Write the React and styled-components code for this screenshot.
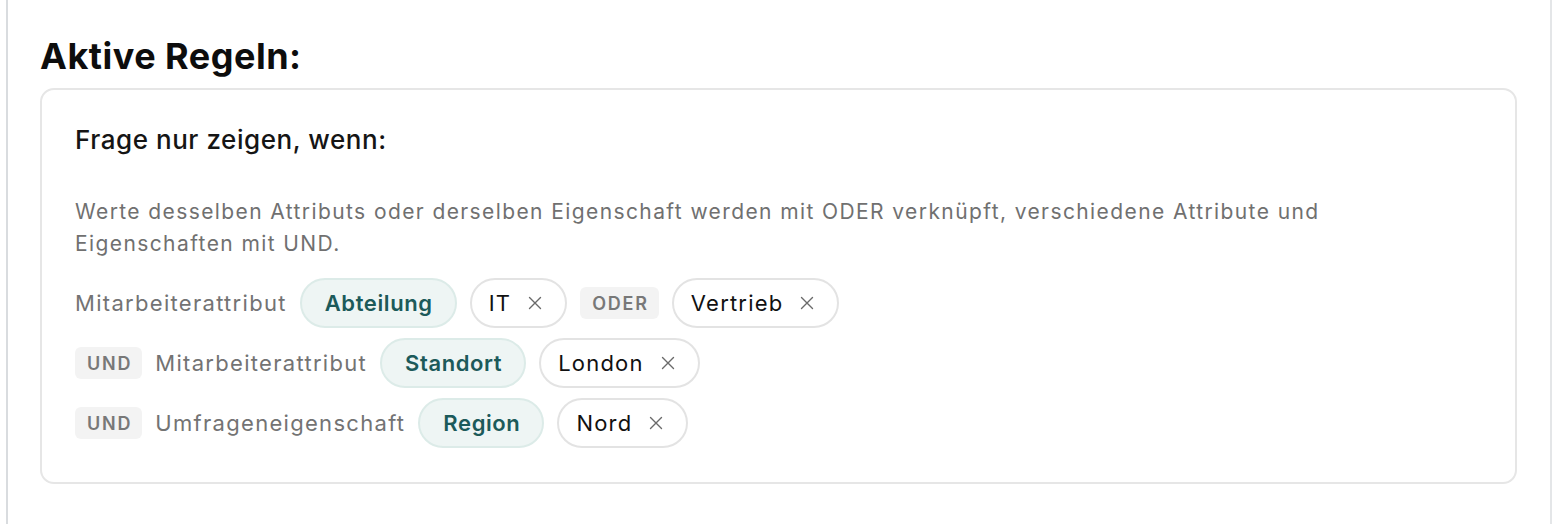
import React from "react";
import styled, { createGlobalStyle } from "styled-components";

const Global = createGlobalStyle`
  html, body { margin: 0; padding: 0; background: #ffffff; }
  body { font-family: Inter, "Noto Sans", "Liberation Sans", sans-serif; color: #111; }
`;

const Panel = styled.div`
  margin: 0 6px;
  height: 524px;
  box-sizing: border-box;
  border-left: 2px solid #d9dcdf;
  border-right: 2px solid #e4e6e8;
  padding: 36px 32px 0 32px;
`;

const Heading = styled.h2`
  margin: 0 0 12px 0;
  font-size: 36px;
  line-height: 40px;
  font-weight: 700;
  letter-spacing: 0.5px;
  color: #0d0d0d;
`;

const Card = styled.section`
  width: 1477px;
  box-sizing: border-box;
  border: 2px solid #e6e6e6;
  border-radius: 14px;
  padding: 34px 33px 34px 33px;
`;

const CardTitle = styled.h3`
  margin: 0 0 40px 0;
  font-size: 26px;
  line-height: 32px;
  font-weight: 500;
  letter-spacing: 0.55px;
  color: #151515;
`;

const Description = styled.p`
  margin: 0 0 18px 0;
  font-size: 21px;
  line-height: 32px;
  letter-spacing: 1.4px;
  color: #707070;
  max-width: 1275px;
`;

const Rules = styled.div`
  display: flex;
  flex-direction: column;
  gap: 10px;
`;

const Row = styled.div`
  display: flex;
  align-items: center;
  gap: 13px;
  height: 50px;
`;

const Label = styled.span`
  font-size: 22px;
  letter-spacing: 1.3px;
  color: #737373;
`;

const Connector = styled.span`
  display: inline-flex;
  align-items: center;
  height: 32px;
  padding: 0 10px 0 12px;
  border-radius: 6px;
  background: #f3f3f3;
  color: #787878;
  font-size: 18px;
  font-weight: 600;
  letter-spacing: 1.8px;
`;

const AttrPill = styled.span`
  display: inline-flex;
  align-items: center;
  height: 50px;
  box-sizing: border-box;
  padding: 0 22px 0 23px;
  border-radius: 25px;
  background: #eef5f4;
  border: 2px solid #dcebe8;
  color: #1c5a5a;
  font-size: 22px;
  font-weight: 600;
  letter-spacing: 0.6px;
`;

const ValuePill = styled.span`
  display: inline-flex;
  align-items: center;
  gap: 17px;
  height: 50px;
  box-sizing: border-box;
  padding: 0 23px 0 17px;
  border-radius: 25px;
  background: #fff;
  border: 2px solid #e3e3e3;
  color: #111;
  font-size: 22px;
  letter-spacing: 1.2px;
`;

const Remove = styled.span`
  display: inline-flex;
  color: #6a6a6a;
`;

const X = () => (
  <Remove>
    <svg width="14" height="14" viewBox="0 0 14 14" fill="none" stroke="currentColor" strokeWidth="1.4" strokeLinecap="round">
      <path d="M1.5 1.5 L12.5 12.5 M12.5 1.5 L1.5 12.5" />
    </svg>
  </Remove>
);

const rules = [
  { conn: null, label: "Mitarbeiterattribut", attr: "Abteilung", values: ["IT", "Vertrieb"] },
  { conn: "UND", label: "Mitarbeiterattribut", attr: "Standort", values: ["London"] },
  { conn: "UND", label: "Umfrageneigenschaft", attr: "Region", values: ["Nord"] },
];

export default function App() {
  return (
    <>
      <Global />
      <Panel>
        <Heading>Aktive Regeln:</Heading>
        <Card>
          <CardTitle>Frage nur zeigen, wenn:</CardTitle>
          <Description>
            Werte desselben Attributs oder derselben Eigenschaft werden mit ODER verknüpft, verschiedene Attribute und Eigenschaften mit UND.
          </Description>
          <Rules>
            {rules.map((r, i) => (
              <Row key={i}>
                {r.conn && <Connector>{r.conn}</Connector>}
                <Label>{r.label}</Label>
                <AttrPill>{r.attr}</AttrPill>
                {r.values.map((v, j) => (
                  <React.Fragment key={v}>
                    {j > 0 && <Connector>ODER</Connector>}
                    <ValuePill>
                      {v}
                      <X />
                    </ValuePill>
                  </React.Fragment>
                ))}
              </Row>
            ))}
          </Rules>
        </Card>
      </Panel>
    </>
  );
}
